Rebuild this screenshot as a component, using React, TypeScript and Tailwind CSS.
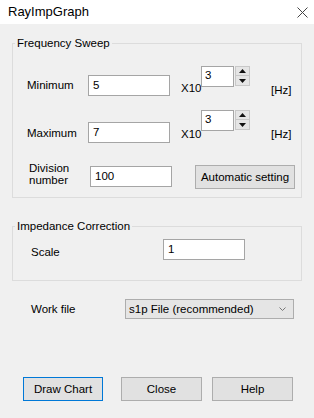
import React from "react";

const font = { fontFamily: '"Liberation Sans", Arial, sans-serif' };

function Spin() {
  return (
    <div className="flex h-[21px] w-[49px]">
      <div className="w-[34px] h-[21px] bg-white border border-[#a5a5a5] pl-[3px] text-[11.5px] leading-[17px] text-black">3</div>
      <div className="flex flex-col w-[15px] h-[20px] ml-[1px]">
        <div className="h-[10px] bg-[#e5e5e5] border border-[#c8c8c8] flex items-center justify-center">
          <svg width="7" height="4" viewBox="0 0 7 4"><path d="M0 4 L3.5 0 L7 4 Z" fill="#111" /></svg>
        </div>
        <div className="h-[10px] bg-[#e5e5e5] border border-[#c8c8c8] border-t-0 flex items-center justify-center">
          <svg width="7" height="4" viewBox="0 0 7 4"><path d="M0 0 L3.5 4 L7 0 Z" fill="#111" /></svg>
        </div>
      </div>
    </div>
  );
}

function Input({ v, w }: { v: string; w: string }) {
  return (
    <div className={`${w} h-[21px] bg-white border border-[#a5a5a5] pl-[4px] text-[11.5px] leading-[19px] text-black`}>{v}</div>
  );
}

export default function App() {
  return (
    <div style={font} className="w-[314px] h-[418px] bg-[#f0f0f0] text-black text-[11.5px] leading-[14px] overflow-hidden">
      <div className="h-[24px] bg-white flex items-center justify-between pl-[8px] pr-[6px]">
        <span className="text-[13px] leading-[14px]">RayImpGraph</span>
        <svg width="11" height="11" viewBox="0 0 11 11"><path d="M0.5 0.5 L10.5 10.5 M10.5 0.5 L0.5 10.5" stroke="#444" strokeWidth="1" /></svg>
      </div>
      <div className="px-[12px]">
        <fieldset className="mt-[12px] h-[162px] border border-[#dcdcdc] pl-0">
          <legend className="ml-[2px] px-[2px] text-[11.5px] leading-[14px]">Frequency Sweep</legend>
          <div className="flex items-start h-[30px] mt-[16px]">
            <span className="w-[61px] pl-[14px] mt-[12px] box-content">Minimum</span>
            <div className="mt-[9px]"><Input v="5" w="w-[82px]" /></div>
            <span className="w-[20px] ml-[11px] mt-[15px]">X10</span>
            <Spin />
            <span className="ml-[21px] mt-[17px]">[Hz]</span>
          </div>
          <div className="flex items-start h-[33px] mt-[14px]">
            <span className="w-[61px] pl-[14px] mt-[16px] box-content">Maximum</span>
            <div className="mt-[12px]"><Input v="7" w="w-[82px]" /></div>
            <span className="w-[20px] ml-[11px] mt-[17px]">X10</span>
            <Spin />
            <span className="ml-[21px] mt-[17px]">[Hz]</span>
          </div>
          <div className="flex items-start mt-[18px]">
            <span className="w-[61px] pl-[16px] mt-[1px] leading-[12px] box-content">Division<br />number</span>
            <div className="mt-[5px]"><Input v="100" w="w-[82px]" /></div>
            <button className="ml-[23px] mt-[4px] w-[100px] h-[24px] bg-[#e1e1e1] border border-[#adadad] text-[11.5px]">Automatic setting</button>
          </div>
        </fieldset>
        <fieldset className="mt-[21px] h-[62px] border border-[#dcdcdc]">
          <legend className="ml-[2px] px-[2px] text-[11.5px] leading-[14px]">Impedance Correction</legend>
          <div className="flex items-start mt-[6px]">
            <span className="w-[132px] pl-[18px] mt-[6px] box-content">Scale</span>
            <Input v="1" w="w-[82px]" />
          </div>
        </fieldset>
        <div className="flex items-center mt-[18px] h-[20px]">
          <span className="w-[94px] pl-[19px] box-content">Work file</span>
          <div className="w-[169px] h-[20px] bg-[#e5e5e5] border border-[#adadad] flex items-center justify-between pl-[3px] pr-[7px]">
            <span>s1p File (recommended)</span>
            <svg width="7" height="4" viewBox="0 0 7 4"><path d="M0.5 0.5 L3.5 3.5 L6.5 0.5" stroke="#777" fill="none" /></svg>
          </div>
        </div>
        <div className="flex mt-[58px] pl-[11px]">
          <button className="w-[80px] h-[24px] bg-[#e1e1e1] border border-[#0078d7] text-[11.5px]">Draw Chart</button>
          <button className="ml-[18px] w-[81px] h-[24px] bg-[#e1e1e1] border border-[#adadad] text-[11.5px]">Close</button>
          <button className="ml-[10px] w-[81px] h-[24px] bg-[#e1e1e1] border border-[#adadad] text-[11.5px]">Help</button>
        </div>
      </div>
    </div>
  );
}
